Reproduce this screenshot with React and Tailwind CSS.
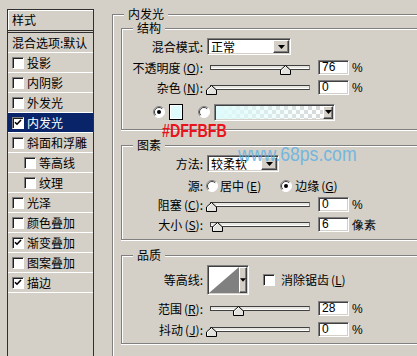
import React from 'react';

const sunken = 'border border-t-[#808080] border-l-[#808080] border-r-white border-b-white shadow-[inset_1px_1px_0_#404040,inset_-1px_-1px_0_#d4d0c8]';
const raised = 'bg-[#d4d0c8] border border-t-white border-l-white border-r-[#404040] border-b-[#404040] shadow-[inset_-1px_-1px_0_#808080]';

const M = ({ c }) => (
    <span className="ml-[2px]">(<span className="underline underline-offset-[1px]">{c}</span>)</span>
);

const Check = ({ on }) => (
    <span className="w-[12px] h-[12px] shrink-0 bg-white border border-t-[#808080] border-l-[#808080] border-r-white border-b-white shadow-[inset_1px_1px_0_#202020] flex items-center justify-center">
        {on && (
            <svg width="8" height="7" viewBox="0 0 8 7">
                <path d="M1 3.2 L3 5.2 L7 1" stroke="#000" strokeWidth="1.6" fill="none" />
            </svg>
        )}
    </span>
);

const Radio = ({ on }) => (
    <svg width="12" height="12" viewBox="0 0 12 12" className="shrink-0">
        <circle cx="6" cy="6" r="5.5" fill="#fff" />
        <path d="M2.1 9.9 A5.5 5.5 0 0 1 9.9 2.1" stroke="#808080" fill="none" />
        <path d="M2.8 9.2 A4.5 4.5 0 0 1 9.2 2.8" stroke="#404040" fill="none" />
        <path d="M9.9 2.1 A5.5 5.5 0 0 1 2.1 9.9" stroke="#fff" fill="none" />
        {on && <circle cx="6" cy="6" r="2" fill="#000" />}
    </svg>
);

const DropBtn = ({ className = '' }) => (
    <span className={`${raised} ${className} h-full shrink-0 flex items-center justify-center`}>
        <svg width="7" height="4" viewBox="0 0 7 4"><path d="M0 0h7L3.5 4z" fill="#000" /></svg>
    </span>
);

const Select = ({ value, className }) => (
    <div className={`${sunken} ${className} h-[17px] bg-white flex p-[1px]`}>
        <span className="flex-1 pl-[2px] leading-[13px]">{value}</span>
        <DropBtn className="w-[16px]" />
    </div>
);

const Field = ({ v }) => (
    <div className={`${sunken} w-[31px] h-[15px] bg-white pl-[3px] leading-[13px] font-['Liberation_Sans',sans-serif] text-[12px]`}>{v}</div>
);

const Slider = ({ v }) => (
    <div className="w-[108px] px-[4px] shrink-0">
        <div className="relative h-[5px] border border-t-[#404040] border-l-[#404040] border-b-[#404040] border-r-[#808080] bg-[#e8e6e0] shadow-[inset_0_-1px_0_#fff]">
            <svg width="11" height="10" viewBox="0 0 11 10" className="absolute top-[-1px]" style={{ left: `calc(${v}% - 5px)` }}>
                <path d="M5.5 0.5 L10.5 5 L10.5 9.5 L0.5 9.5 L0.5 5 Z" fill="#e4e2dc" stroke="#000" />
                <path d="M5.5 1.6 L1.5 5.3 L1.5 8.5" stroke="#fff" fill="none" />
            </svg>
        </div>
    </div>
);

const Row = ({ label, className = '', children }) => (
    <div className={`flex items-center ${className}`}>
        <div className="w-[81px] shrink-0 text-right whitespace-nowrap leading-[14px]">{label}</div>
        <div className="ml-[3px] flex items-center h-full">{children}</div>
    </div>
);

const SliderRow = ({ label, v, unit = '%', className = '' }) => (
    <Row label={label} className={`h-[15px] ${className}`}>
        <Slider v={v} />
        <span className="ml-[4px]"><Field v={v} /></span>
        <span className="ml-[3px] font-['Liberation_Sans',sans-serif] text-[12px]">{unit}</span>
    </Row>
);

const Group = ({ title, corner, body, className = '', children }) => (
    <div className={className}>
        <div className="flex h-[14px]">
            <div className={`${corner} self-end h-[7px] border-t border-l border-[#808080] shadow-[inset_1px_1px_0_#fff]`} />
            <span className="pl-[4px] pr-[4px] leading-[14px] whitespace-nowrap">{title}</span>
            <div className="flex-1 mt-[7px] h-[2px] border-t border-[#808080] shadow-[inset_0_1px_0_#fff]" />
        </div>
        <div className={`border-l border-[#808080] ${body}`}>{children}</div>
    </div>
);

const items = [
    { t: '投影' },
    { t: '内阴影' },
    { t: '外发光' },
    { t: '内发光', on: true, sel: true },
    { t: '斜面和浮雕' },
    { t: '等高线', sub: true },
    { t: '纹理', sub: true },
    { t: '光泽' },
    { t: '颜色叠加' },
    { t: '渐变叠加', on: true },
    { t: '图案叠加' },
    { t: '描边', on: true },
];

const inner = 'border-b shadow-[inset_1px_0_0_#fff,0_1px_0_#fff]';

export default function App() {
    return (
        <div className="relative w-[417px] h-[356px] overflow-hidden bg-[#d4d0c8] flex text-[12px] text-black font-['Noto_Sans_CJK_SC',sans-serif]">
            {/* Styles list */}
            <div className="ml-[7px] mt-[9px] w-[87px] h-[360px] shrink-0 flex flex-col border-x border-t border-[#303030]">
                <div className="h-[21px] border-b border-[#303030] shadow-[inset_1px_1px_0_#fff] pl-[4px] flex items-center">样式</div>
                <div className="mt-[1px] h-[21px] border-t border-[#303030] border-b border-b-white pl-[4px] flex items-center whitespace-nowrap">混合选项:默认</div>
                {items.map(it => (
                    <div key={it.t} className={`h-[20px] border-b border-white flex items-center gap-[3px] ${it.sub ? 'pl-[16px]' : 'pl-[4px]'} ${it.sel ? 'bg-[#0a246a] text-white' : ''}`}>
                        <Check on={it.on} />
                        <span className="leading-[14px]">{it.t}</span>
                    </div>
                ))}
            </div>

            {/* Inner glow panel */}
            <div className="ml-[18px] mt-[7px] w-[330px] shrink-0">
                <Group title="内发光" corner="w-[12px]" body="shadow-[inset_1px_0_0_#fff] pb-[40px]">
                    <div className="ml-[8px]">
                        <Group title="结构" corner="w-[12px]" body={`${inner} pt-[3px] pb-[9px]`}>
                            <Row label="混合模式:" className="h-[17px]">
                                <Select value="正常" className="w-[84px] ml-[1px]" />
                            </Row>
                            <SliderRow label={<>不透明度<M c="O" />:</>} v={76} className="mt-[5px]" />
                            <SliderRow label={<>杂色<M c="N" />:</>} v={0} className="mt-[5px]" />
                            <div className="mt-[9px] h-[16px] flex items-center pl-[31px]">
                                <Radio on />
                                <span className="ml-[4px] w-[14px] h-[16px] border border-black bg-[#dffbfb] shadow-[inset_0_0_0_1px_#fff]" />
                                <span className="ml-[15px]"><Radio /></span>
                                <div className={`${sunken} ml-[4px] w-[121px] h-[17px] flex p-[1px]`}>
                                    <span className="flex-1 bg-[linear-gradient(to_right,#dffbfb,rgba(223,251,251,0)),repeating-conic-gradient(#d8d8d8_0_25%,#fff_0_50%)] bg-[length:100%_100%,8px_8px]" />
                                    <DropBtn className="w-[10px]" />
                                </div>
                            </div>
                        </Group>

                        <Group title="图素" corner="w-[12px]" body={`${inner} pt-[3px] pb-[7px]`} className="mt-[8px]">
                            <Row label="方法:" className="h-[17px]">
                                <Select value="较柔软" className="w-[72px] ml-[1px]" />
                            </Row>
                            <Row label="源:" className="h-[14px] mt-[7px]">
                                <Radio />
                                <span className="ml-[2px] leading-[14px]">居中<M c="E" /></span>
                                <span className="ml-[19px]"><Radio on /></span>
                                <span className="ml-[3px] leading-[14px]">边缘<M c="G" /></span>
                            </Row>
                            <SliderRow label={<>阻塞<M c="C" />:</>} v={0} className="mt-[4px]" />
                            <SliderRow label={<>大小<M c="S" />:</>} v={6} unit="像素" className="mt-[5px]" />
                        </Group>

                        <Group title="品质" corner="w-[12px]" body={`${inner} pt-[3px] pb-[6px]`} className="mt-[8px]">
                            <Row label="等高线:" className="h-[30px]">
                                <div className={`${sunken} ml-[1px] w-[42px] h-[30px] flex p-[1px]`}>
                                    <svg width="30" height="26" viewBox="0 0 30 26" className="shrink-0">
                                        <rect width="30" height="26" fill="#fff" />
                                        <path d="M0 26 L30 0 L30 26 Z" fill="#808080" />
                                    </svg>
                                    <DropBtn className="w-[8px]" />
                                </div>
                                <span className="ml-[14px]"><Check /></span>
                                <span className="ml-[6px] leading-[14px] whitespace-nowrap">消除锯齿<M c="L" /></span>
                            </Row>
                            <SliderRow label={<>范围<M c="R" />:</>} v={28} className="mt-[6px]" />
                            <SliderRow label={<>抖动<M c="J" />:</>} v={0} className="mt-[6px]" />
                        </Group>
                    </div>
                </Group>
            </div>

            {/* annotation + watermark over the dialog */}
            <span className="absolute left-[162px] top-[121px] origin-left scale-x-[0.79] text-[18px] font-bold text-[#e8131b] font-['Liberation_Sans',sans-serif] leading-[20px]">#DFFBFB</span>
            <span className="absolute left-[238px] top-[142px] origin-left scale-x-[0.84] text-[21px] text-[#5cb0e4] opacity-80 font-['Liberation_Sans',sans-serif] leading-[24px]">www.68ps.com</span>
        </div>
    );
}
